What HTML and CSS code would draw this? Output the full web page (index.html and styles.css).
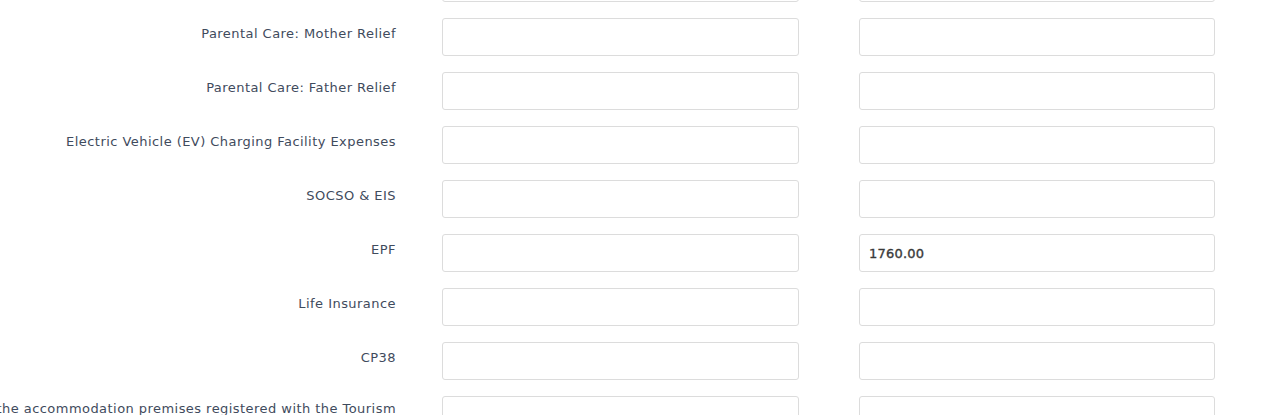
FILE: index.html
```html
<!DOCTYPE html>
<html lang="en">
<head>
    <meta charset="UTF-8">
    <meta name="viewport" content="width=device-width, initial-scale=1.0">
    <title>Tax Relief</title>
    <link rel="stylesheet" href="styles.css">
</head>
<body>
    <div class="relief-form">
        <div class="form-row">
            <label class="row-label">Parental Care: Medical Expenses</label>
            <input type="text" class="field">
            <input type="text" class="field">
        </div>
        <div class="form-row">
            <label class="row-label">Parental Care: Mother Relief</label>
            <input type="text" class="field">
            <input type="text" class="field">
        </div>
        <div class="form-row">
            <label class="row-label">Parental Care: Father Relief</label>
            <input type="text" class="field">
            <input type="text" class="field">
        </div>
        <div class="form-row">
            <label class="row-label">Electric Vehicle (EV) Charging Facility Expenses</label>
            <input type="text" class="field">
            <input type="text" class="field">
        </div>
        <div class="form-row">
            <label class="row-label">SOCSO &amp; EIS</label>
            <input type="text" class="field">
            <input type="text" class="field">
        </div>
        <div class="form-row">
            <label class="row-label">EPF</label>
            <input type="text" class="field">
            <input type="text" class="field" value="1760.00">
        </div>
        <div class="form-row">
            <label class="row-label">Life Insurance</label>
            <input type="text" class="field">
            <input type="text" class="field">
        </div>
        <div class="form-row">
            <label class="row-label">CP38</label>
            <input type="text" class="field">
            <input type="text" class="field">
        </div>
        <div class="form-row">
            <label class="row-label long">
                <span>Domestic Tourism: Accommodation fees at the accommodation premises registered with the Tourism<br>Commissioner</span>
            </label>
            <input type="text" class="field">
            <input type="text" class="field">
        </div>
    </div>
</body>
</html>
```

FILE: styles.css
```css
body {
    margin: 0;
    background: #fff;
    font-family: "DejaVu Sans", Verdana, sans-serif;
    overflow: hidden;
}
.relief-form {
    margin-top: -36px;
}
.form-row {
    display: flex;
    align-items: flex-start;
    margin-bottom: 16px;
}
.row-label {
    width: 396px;
    flex-shrink: 0;
    padding-top: 8px;
    font-size: 13px;
    line-height: 16px;
    letter-spacing: 0.45px;
    color: #3f4b5d;
    text-align: right;
}
.row-label.long {
    display: flex;
    justify-content: flex-end;
    padding-top: 5px;
}
.row-label.long span {
    flex-shrink: 0;
    white-space: nowrap;
}
.field {
    box-sizing: border-box;
    height: 38px;
    margin: 0;
    padding: 0 9px;
    border: 1px solid #dcdcdc;
    border-radius: 3px;
    background: #fff;
    font-family: "DejaVu Sans", Verdana, sans-serif;
    font-size: 13px;
    color: #3a3a3a;
    -webkit-text-stroke: 0.35px #3a3a3a;
    letter-spacing: 0.2px;
    outline: none;
}
.row-label + .field {
    width: 357px;
    margin-left: 46px;
}
.field + .field {
    width: 356px;
    margin-left: 60px;
}
```
